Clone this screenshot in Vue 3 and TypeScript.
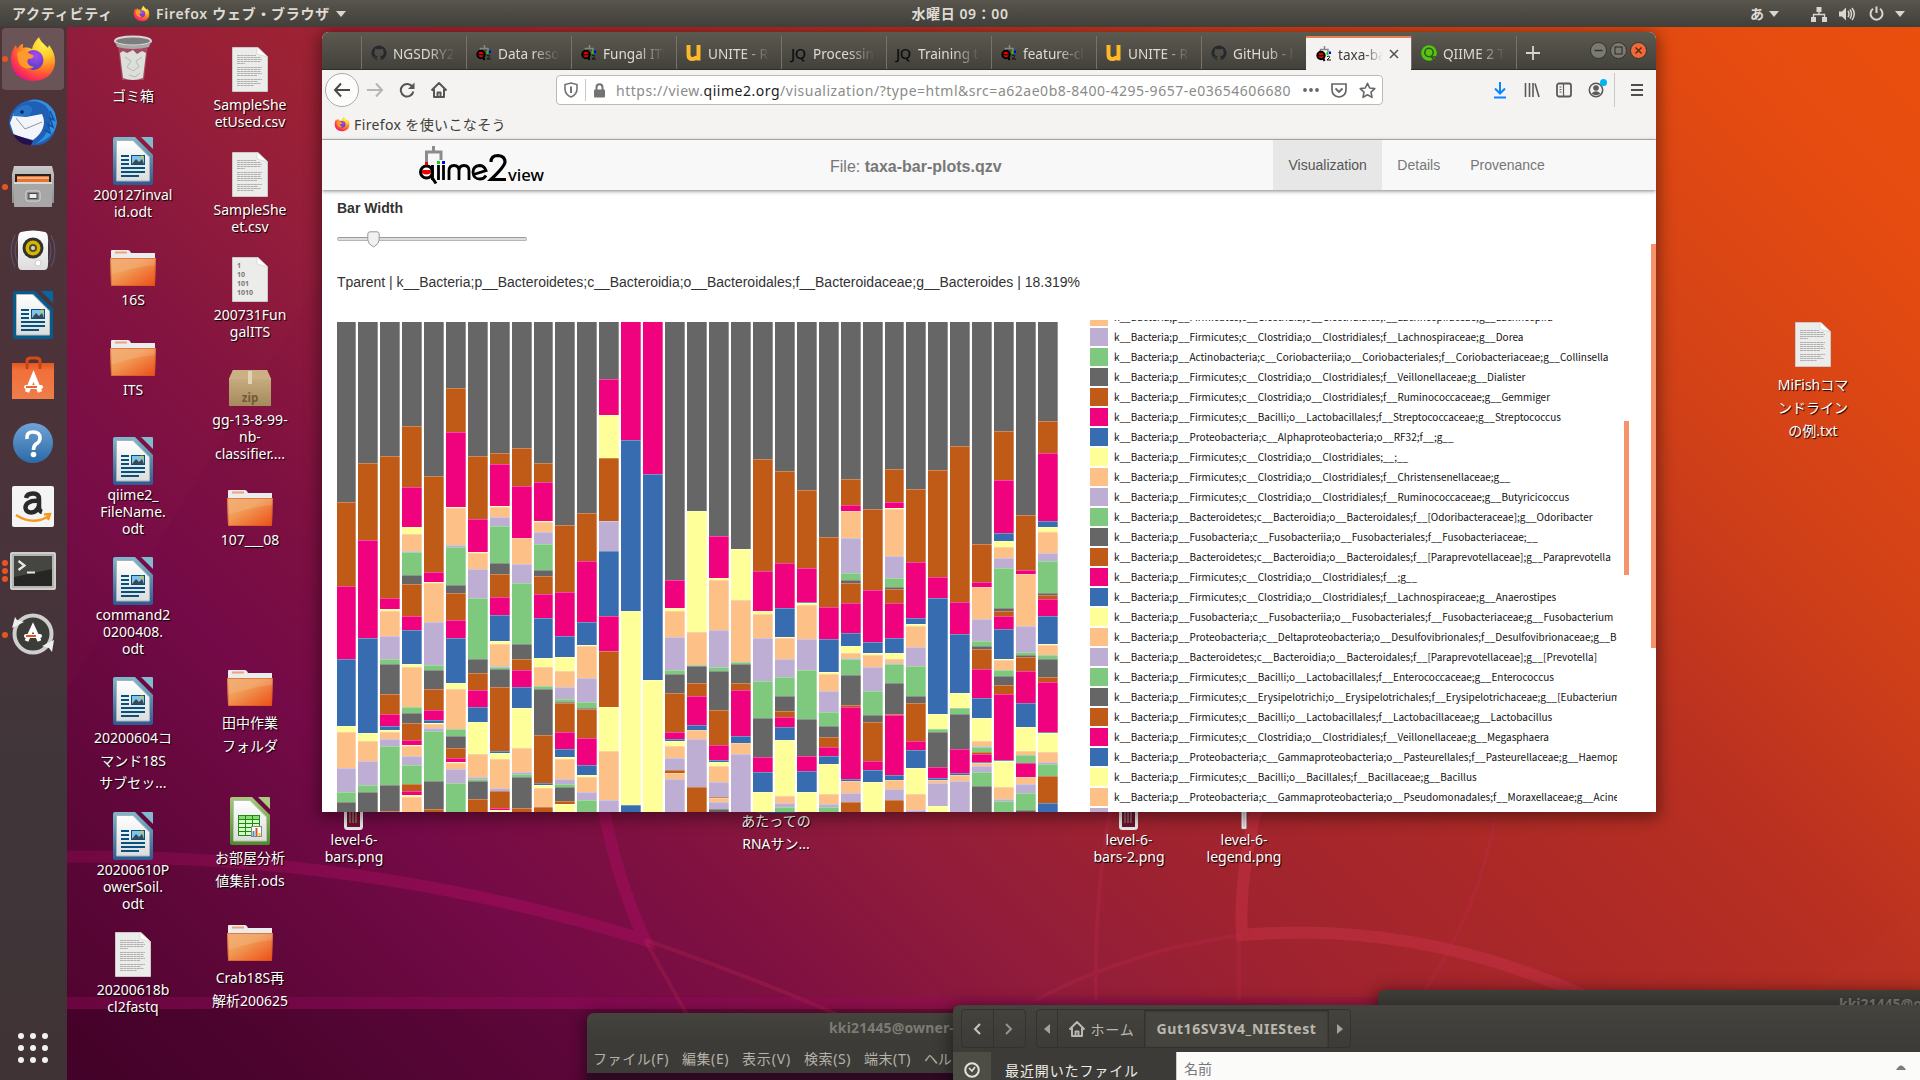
<script setup lang="ts">
interface DesktopItem {
  x: number
  y: number
  icon: string
  w: number
  h: number
  label: number
  lh: number
  lines: string[]
}

interface Segment {
  color: string
  height: number
}

interface Tab {
  icon: string
  title: string
  active?: boolean
}

// Spreads the letters of an element so that it takes the given width.
const vFit = {
  mounted(el: HTMLElement, binding: { value: number }) {
    const width = el.getBoundingClientRect().width
    const count = (el.textContent || '').trim().length
    el.style.letterSpacing = `${(binding.value - width) / count}px`
  },
}

const palette: Record<string, string> = {
  G: '#666666',
  O: '#bf5b17',
  P: '#f0027f',
  B: '#386cb0',
  Y: '#ffff99',
  A: '#fdc086',
  V: '#beaed4',
  E: '#7fc97f',
}

const chartTop = 322

// Each bar lists its taxa from the top down, as colour letter and bottom edge.
const barData: string[] = [
  'G502 O586 P659 B726 Y732 A768 V792 E802 G812',
  'G463 O540 P638 B733 Y741 A761 V785 E792 G812',
  'G456 O598 P609 Y611 A636 V659 E664 G694 O714 P726 B730 Y732 A739 V746 E785 G811 O812',
  'G426 O487 P527 Y534 A551 V552 E575 G584 O616 P630 B664 Y667 A707 E713 G723 O740 P745 Y746 A756 V765 E784 O791 P795 Y797 A812',
  'G476 O572 P582 Y583 A622 V665 E670 G689 O710 P720 B723 Y724 A728 V731 E781 G809 O812',
  'G388 O432 P507 Y508 A545 V547 E585 G593 O620 P638 B683 Y689 A729 E736 G748 O758 P762 Y763 A769 V783 E812',
  'G456 O519 P552 Y553 A569 V598 E659 G673 O690 P707 B722 Y754 A777 V779 E781 G799 O812',
  'G453 O464 P506 Y507 A517 V526 E563 G574 O597 P615 B641 Y644 A666 V667 E669 G687 O751 B753 Y759 A788 V791 O808 P810 Y812',
  'G448 O486 P538 A564 V583 E644 G659 O670 P687 B708 Y748 A772 V774 E777 G808 O812',
  'G463 O482 P521 Y522 A532 V544 E570 G576 O594 P618 B658 Y667 A686 E689 G735 O783 B785 Y788 A807 O812',
  'G525 O592 P636 B657 Y671 A687 V699 E702 G703 O732 P749 B757 Y759 A779 V784 E787 G801 O804 Y812',
  'G513 O561 P622 B645 Y646 A678 V702 E708 G709 O738 P765 B775 Y777 A792 V800 E812',
  'G379 P415 Y458 O521 V551 B616 P651 O707 Y751 A800 V812',
  'P440 B611 Y805 B812',
  'P474 B680 Y812',
  'G580 P608 Y611 A637 V670 E674 G693 O732 P739 B741 Y746 A758 V770 O773 A779 V812',
  'G511 Y632 A665 E666 G683 O696 P725 B730 A739 V787 O812',
  'G536 P578 Y580 A630 V667 E671 G710 O745 P760 B762 Y766 A782 V797 O798 A802 V809 G812',
  'G549 Y600 A662 E664 G683 O690 P736 B743 A754 V812',
  'G459 O571 P611 Y614 A638 V681 E718 G757 P772 B792 Y812',
  'G471 O563 P608 B637 Y638 A659 V677 E696 G711 O717 P727 B740 Y796 A803 V807 E812',
  'G490 O568 P602 B603 Y605 A639 V670 E719 G756 P771 B792 Y812',
  'G537 O607 P639 B672 Y674 A691 V712 E726 G737 O747 P756 B764 Y794 A804 V807 E812',
  'G479 O505 P511 A538 V573 E580 G583 O603 P633 B646 Y653 A658 V659 E675 G705 O707 P779 B781 A793 V802 O812',
  'G509 O590 P642 B653 Y655 A667 V691 E715 G722 O761 P770 B782 Y812',
  'G469 O502 P508 Y509 A556 V578 E587 G589 O603 P638 B653 Y659 A663 V664 E683 G714 O715 P775 B780 A789 V800 O812',
  'G489 O562 P618 B624 Y626 A647 V666 E696 G703 O741 P750 B768 Y794 A810 V812',
  'G470 O577 P598 B714 Y729 E732 G767 P778 B780 A783 V806 Y812',
  'G446 O602 P634 B693 Y708 E714 G749 P773 B775 A781 V812',
  'G544 O582 P587 A619 V641 E646 G649 O669 P698 B718 Y741 A746 V747 E752 O754 P762 B763 A766 V772 E786 G812',
  'G431 O480 P533 B541 Y547 A558 V568 E608 G611 O616 P629 B659 Y660 A670 E676 G685 O694 P760 B761 Y787 A799 V801 E812',
  'G515 O570 P574 A626 V652 E655 G657 O671 P703 B727 Y751 A755 E763 P777 A784 V793 E810 G812',
  'G421 O453 P521 B527 Y532 A553 V561 E593 G595 O599 P616 B644 Y645 A655 E659 G677 O682 P732 B733 Y752 A762 V764 E776 O803 B812',
]

const bars: Segment[][] = barData.map((row) => {
  let edge = chartTop
  return row.split(' ').map((part) => {
    const bottom = Number(part.slice(1))
    const segment = { color: palette[part[0]], height: bottom - edge }
    edge = bottom
    return segment
  })
})

const firm = 'p__Firmicutes;c__'
const legendRows: string[] = [
  firm + 'Clostridia;o__Clostridiales;f__Lachnospiraceae;g__Lachnospira',
  firm + 'Clostridia;o__Clostridiales;f__Lachnospiraceae;g__Dorea',
  'p__Actinobacteria;c__Coriobacteriia;o__Coriobacteriales;f__Coriobacteriaceae;g__Collinsella',
  firm + 'Clostridia;o__Clostridiales;f__Veillonellaceae;g__Dialister',
  firm + 'Clostridia;o__Clostridiales;f__Ruminococcaceae;g__Gemmiger',
  firm + 'Bacilli;o__Lactobacillales;f__Streptococcaceae;g__Streptococcus',
  'p__Proteobacteria;c__Alphaproteobacteria;o__RF32;f__;g__',
  firm + 'Clostridia;o__Clostridiales;__;__',
  firm + 'Clostridia;o__Clostridiales;f__Christensenellaceae;g__',
  firm + 'Clostridia;o__Clostridiales;f__Ruminococcaceae;g__Butyricicoccus',
  'p__Bacteroidetes;c__Bacteroidia;o__Bacteroidales;f__[Odoribacteraceae];g__Odoribacter',
  'p__Fusobacteria;c__Fusobacteriia;o__Fusobacteriales;f__Fusobacteriaceae;__',
  'p__Bacteroidetes;c__Bacteroidia;o__Bacteroidales;f__[Paraprevotellaceae];g__Paraprevotella',
  firm + 'Clostridia;o__Clostridiales;f__;g__',
  firm + 'Clostridia;o__Clostridiales;f__Lachnospiraceae;g__Anaerostipes',
  'p__Fusobacteria;c__Fusobacteriia;o__Fusobacteriales;f__Fusobacteriaceae;g__Fusobacterium',
  'p__Proteobacteria;c__Deltaproteobacteria;o__Desulfovibrionales;f__Desulfovibrionaceae;g__Bilophila',
  'p__Bacteroidetes;c__Bacteroidia;o__Bacteroidales;f__[Paraprevotellaceae];g__[Prevotella]',
  firm + 'Bacilli;o__Lactobacillales;f__Enterococcaceae;g__Enterococcus',
  firm + 'Erysipelotrichi;o__Erysipelotrichales;f__Erysipelotrichaceae;g__[Eubacterium]',
  firm + 'Bacilli;o__Lactobacillales;f__Lactobacillaceae;g__Lactobacillus',
  firm + 'Clostridia;o__Clostridiales;f__Veillonellaceae;g__Megasphaera',
  'p__Proteobacteria;c__Gammaproteobacteria;o__Pasteurellales;f__Pasteurellaceae;g__Haemophilus',
  firm + 'Bacilli;o__Bacillales;f__Bacillaceae;g__Bacillus',
  'p__Proteobacteria;c__Gammaproteobacteria;o__Pseudomonadales;f__Moraxellaceae;g__Acinetobacter',
]
const cycle = 'AVEGOPBY'
const legend = legendRows.map((name, i) => ({ name: 'k__Bacteria;' + name, color: palette[cycle[i % 8]] }))

const tabs: Tab[] = [
  { icon: 'github', title: 'NGSDRY2' },
  { icon: 'qiime', title: 'Data resources' },
  { icon: 'qiime', title: 'Fungal ITS' },
  { icon: 'unite', title: 'UNITE - Res' },
  { icon: 'jq', title: 'Processing' },
  { icon: 'jq', title: 'Training tax' },
  { icon: 'qiime', title: 'feature-cla' },
  { icon: 'unite', title: 'UNITE - Res' },
  { icon: 'github', title: 'GitHub - ho' },
  { icon: 'qiime', title: 'taxa-bar', active: true },
  { icon: 'q2g', title: 'QIIME 2 Tax' },
]

const writer = { icon: 'writer-doc', w: 40, h: 48 }
const folder = { icon: 'folder', w: 46, h: 38 }
const textDoc = { icon: 'text-doc', w: 36, h: 45 }

const desktop: DesktopItem[] = [
  { x: 133, y: 35, icon: 'trash', w: 40, h: 46, label: 85, lh: 22, lines: ['ゴミ箱'] },
  { x: 133, y: 137, ...writer, label: 186, lh: 17, lines: ['200127inval', 'id.odt'] },
  { x: 133, y: 249, ...folder, label: 291, lh: 17, lines: ['16S'] },
  { x: 133, y: 339, ...folder, label: 381, lh: 17, lines: ['ITS'] },
  { x: 133, y: 437, ...writer, label: 486, lh: 17, lines: ['qiime2_', 'FileName.', 'odt'] },
  { x: 133, y: 557, ...writer, label: 606, lh: 17, lines: ['command2', '0200408.', 'odt'] },
  { x: 133, y: 677, ...writer, label: 727, lh: 22.7, lines: ['20200604コ', 'マンド18S', 'サブセッ...'] },
  { x: 133, y: 812, ...writer, label: 861, lh: 17, lines: ['20200610P', 'owerSoil.', 'odt'] },
  { x: 133, y: 932, ...textDoc, label: 981, lh: 17, lines: ['20200618b', 'cl2fastq'] },
  { x: 250, y: 47, ...textDoc, label: 96, lh: 17, lines: ['SampleShe', 'etUsed.csv'] },
  { x: 250, y: 152, ...textDoc, label: 201, lh: 17, lines: ['SampleShe', 'et.csv'] },
  { x: 250, y: 257, icon: 'bin-doc', w: 36, h: 45, label: 306, lh: 17, lines: ['200731Fun', 'galITS'] },
  { x: 250, y: 369, icon: 'zip', w: 42, h: 38, label: 411, lh: 17, lines: ['gg-13-8-99-', 'nb-', 'classifier....'] },
  { x: 250, y: 489, ...folder, label: 531, lh: 17, lines: ['107___08'] },
  { x: 250, y: 669, ...folder, label: 712, lh: 22.7, lines: ['田中作業', 'フォルダ'] },
  { x: 250, y: 797, icon: 'calc-doc', w: 40, h: 48, label: 847, lh: 22.7, lines: ['お部屋分析', '値集計.ods'] },
  { x: 250, y: 924, ...folder, label: 967, lh: 22.7, lines: ['Crab18S再', '解析200625'] },
  { x: 354, y: 785, icon: 'png', w: 20, h: 45, label: 831, lh: 17, lines: ['level-6-', 'bars.png'] },
  { x: 776, y: 765, ...writer, label: 810, lh: 22.7, lines: ['あたっての', 'RNAサン...'] },
  { x: 1129, y: 785, icon: 'png', w: 20, h: 45, label: 831, lh: 17, lines: ['level-6-', 'bars-2.png'] },
  { x: 1244, y: 785, icon: 'png-thin', w: 6, h: 45, label: 831, lh: 17, lines: ['level-6-', 'legend.png'] },
  { x: 1813, y: 322, ...textDoc, label: 373, lh: 23, lines: ['MiFishコマ', 'ンドライン', 'の例.txt'] },
]

const dock = [
  { icon: 'firefox', dots: 1 },
  { icon: 'thunderbird', dots: 0 },
  { icon: 'cabinet', dots: 1 },
  { icon: 'speaker', dots: 0 },
  { icon: 'writer-app', dots: 0 },
  { icon: 'software', dots: 0 },
  { icon: 'help', dots: 0 },
  { icon: 'amazon', dots: 0 },
  { icon: 'terminal', dots: 3 },
  { icon: 'updater', dots: 1 },
]

const menus = ['ファイル(F)', '編集(E)', '表示(V)', '検索(S)', '端末(T)', 'ヘルプ(H)']
const menuWidths = [76, 47, 49, 47, 47, 60]
</script>

<template>
  <div class="screen">
    <svg class="defs" width="0" height="0">
      <defs>
        <linearGradient id="gFolder" x1="0" y1="0" x2="1" y2="1">
          <stop offset="0" stop-color="#f0a45e" /><stop offset=".4" stop-color="#f09a55" /><stop offset="1" stop-color="#ee4c14" />
        </linearGradient>
        <radialGradient id="gFire" cx=".75" cy=".15" r=".95">
          <stop offset="0" stop-color="#fff44f" /><stop offset=".3" stop-color="#ffcb2e" /><stop offset=".6" stop-color="#ff7a22" /><stop offset=".85" stop-color="#ff3350" /><stop offset="1" stop-color="#e31587" />
        </radialGradient>
        <radialGradient id="gCore" cx=".6" cy=".3" r=".8">
          <stop offset="0" stop-color="#a74cf2" /><stop offset="1" stop-color="#4b3ab8" />
        </radialGradient>
        <linearGradient id="gGrey" x1="0" y1="0" x2="0" y2="1">
          <stop offset="0" stop-color="#c9c9c9" /><stop offset="1" stop-color="#8c8c8c" />
        </linearGradient>
        <linearGradient id="gPaper" x1="0" y1="0" x2="0" y2="1">
          <stop offset="0" stop-color="#ffffff" /><stop offset="1" stop-color="#dcdcdc" />
        </linearGradient>
        <linearGradient id="gBlue" x1="0" y1="0" x2="0" y2="1">
          <stop offset="0" stop-color="#7fb9cb" /><stop offset="1" stop-color="#2e5a91" />
        </linearGradient>
        <linearGradient id="gCalc" x1="0" y1="0" x2="0" y2="1">
          <stop offset="0" stop-color="#a9c97c" /><stop offset="1" stop-color="#4a8c2c" />
        </linearGradient>
        <linearGradient id="gHelp" x1="0" y1="0" x2="0" y2="1">
          <stop offset="0" stop-color="#6fa3d8" /><stop offset="1" stop-color="#2b6aa6" />
        </linearGradient>
        <linearGradient id="gBag" x1="0" y1="0" x2="0" y2="1">
          <stop offset="0" stop-color="#e2571e" /><stop offset=".2" stop-color="#f0703a" /><stop offset="1" stop-color="#ef7d4a" />
        </linearGradient>
        <linearGradient id="gZip" x1="0" y1="0" x2="0" y2="1">
          <stop offset="0" stop-color="#d0b588" /><stop offset="1" stop-color="#a58a5e" />
        </linearGradient>
      </defs>
      <symbol id="firefox" viewBox="0 0 48 48">
        <path d="M24 46C11 46 2 37 2 25C2 17 5 12 7 10L8 14C10 11 12 9 14 9L14 13C18 12 21 13 23 14C24 9 27 5 30 2C31 6 35 9 39 13L40 10C44 15 46.500 21 46 28C45 39 36 46 24 46Z" fill="url(#gFire)" />
        <circle cx="24.500" cy="25" r="10" fill="url(#gCore)" />
        <path d="M8 18C13 14 18 16 21 19L24 20C26 23 21 24 19 24C17 28 20 31 25 32C19 36 10 32 9 25Z" fill="#ff9a2a" />
      </symbol>
      <symbol id="thunderbird" viewBox="0 0 48 48">
        <path d="M24 1C38 1 48 12 47 26C46 40 35 48 22 46C10 44 0 35 0 22C2 9 12 1 24 1Z" fill="#1f5fb5" />
        <path d="M12 6C22-1 37 2 41 14C44 25 37 39 26 45C38 42 47 34 48 23L46 14C42 5 32-1 22 1Z" fill="#2f8fe0" />
        <path d="M41 12L45 21L41 19L44 28L39 25L41 34L36 31" fill="none" stroke="#174f9f" stroke-width="1.500" />
        <path d="M1 24L5 14L17 18L33 15C38 25 33 35 24 41L5 36Z" fill="#f3f5fb" />
        <path d="M7 19L16 30L33 23" fill="none" stroke="#8a93a5" stroke-width="1" />
        <path d="M4 17C6 9 15 4 21 7C25 9 23 16 17 18Z" fill="#2a74c8" />
        <path d="M4 35L24 42L22 46C14 46 8 43 4 35Z" fill="#24104d" />
        <circle cx="13" cy="13" r="1.800" fill="#0c2347" />
      </symbol>
      <symbol id="cabinet" viewBox="0 0 48 48">
        <path d="M5 3H43L45 11V40H3V11Z" fill="url(#gGrey)" /><rect x="6" y="11" width="36" height="9" fill="#2b2220" />
        <rect x="8" y="13" width="32" height="6" fill="#e7732d" /><path d="M8 15H40" stroke="#fff0db" />
        <rect x="5" y="19" width="38" height="25" rx="1" fill="#a7a7a7" /><rect x="5" y="19" width="38" height="2" fill="#d9d9d9" />
        <rect x="17" y="28" width="14" height="10" rx="2" fill="#8b8b8b" stroke="#ddd" /><rect x="20" y="30.500" width="8" height="5" fill="#eee" stroke="#444" />
      </symbol>
      <symbol id="speaker" viewBox="0 0 48 48">
        <path d="M6 8Q-2 24 6 40M10 10Q2 24 10 38M42 8Q50 24 42 40M38 10Q46 24 38 38" fill="none" stroke="#5c6792" opacity=".7" />
        <path d="M12 5Q24 2 36 5Q39 6 39 12V38Q39 43 35 43H13Q9 43 9 38V12Q9 6 12 5Z" fill="url(#gPaper)" />
        <circle cx="24" cy="21" r="10.500" fill="#33332d" /><circle cx="24" cy="21" r="7.500" fill="#d6b500" /><circle cx="24" cy="21" r="4" fill="#55502a" /><circle cx="24" cy="21" r="2" fill="#d6d6d6" />
        <circle cx="29" cy="36" r="3" fill="#fff" stroke="#ccc" />
      </symbol>
      <symbol id="writer-app" viewBox="0 0 40 48">
        <path d="M2 0H22L40 18V46Q40 48 38 48H2Q0 48 0 46V2Q0 0 2 0Z" fill="#085b8d" /><path d="M28 0H40V12Z" fill="#0467a1" />
        <path d="M3.500 3.500H20L36.500 20V44H3.500Z" fill="url(#gPaper)" stroke="#bbb" />
        <path d="M8 19H16M8 23H16M8 27H16M8 31H32M8 35H32M8 39H26" stroke="#06527f" stroke-width="2" />
        <rect x="18.500" y="18.500" width="13" height="9" fill="#7fc4ee" stroke="#06527f" /><path d="M19 27L23 22L26 25L29 22L31 27Z" fill="#3c4a50" /><circle cx="29" cy="20" r="1.500" fill="#e6c229" />
      </symbol>
      <symbol id="writer-doc" viewBox="0 0 40 48">
        <path d="M2 0H22L40 18V46Q40 48 38 48H2Q0 48 0 46V2Q0 0 2 0Z" fill="url(#gBlue)" /><path d="M28 0H39Q40 0 40 1V12Z" fill="#82bbcd" />
        <path d="M3.500 3.500H20L36.500 20V44H3.500Z" fill="url(#gPaper)" stroke="#a9b4ba" />
        <path d="M8 19H16M8 23H16M8 27H16M8 31H32M8 35H32M8 39H26" stroke="#06527f" stroke-width="2" />
        <rect x="18.500" y="18.500" width="13" height="9" fill="#7fc4ee" stroke="#06527f" /><path d="M19 27L23 22L26 25L29 22L31 27Z" fill="#3c4a50" /><circle cx="29" cy="20" r="1.500" fill="#e6c229" />
      </symbol>
      <symbol id="calc-doc" viewBox="0 0 40 48">
        <path d="M2 0H22L40 18V46Q40 48 38 48H2Q0 48 0 46V2Q0 0 2 0Z" fill="url(#gCalc)" /><path d="M28 0H39Q40 0 40 1V12Z" fill="#acca80" />
        <path d="M3.500 3.500H20L36.500 20V44H3.500Z" fill="url(#gPaper)" stroke="#b7c4ac" />
        <rect x="8.500" y="18.500" width="21" height="20" fill="#d4fbc8" stroke="#1f8a10" /><rect x="9" y="19" width="20" height="3" fill="#86dc74" />
        <path d="M8 22.500H30M8 26.500H30M8 30.500H30M8 34.500H30M15.500 18V39M22.500 18V39" stroke="#1f8a10" />
        <rect x="21.500" y="29.500" width="10" height="10" fill="#fff" stroke="#888" /><path d="M23.500 39V34" stroke="#2c98e0" stroke-width="2" /><path d="M26.500 39V31" stroke="#d9541e" stroke-width="2" /><path d="M29.500 39V36" stroke="#f0c419" stroke-width="2" />
      </symbol>
      <symbol id="software" viewBox="0 0 48 48">
        <path d="M18 14V6Q18 3 22 3H27Q31 3 31 6V14" fill="none" stroke="#d64a15" stroke-width="3" />
        <path d="M3 8H45V44H3Z" fill="url(#gBag)" /><path d="M18 8V14M31 8V14" stroke="#c74412" stroke-width="3" />
        <path d="M18 37L24.500 21L31 37" fill="none" stroke="#fff" stroke-width="4.500" /><rect x="15" y="30" width="19" height="4" rx="2" fill="#fff" /><path d="M17 32H28" stroke="#e95420" stroke-width="1.800" />
      </symbol>
      <symbol id="help" viewBox="0 0 48 48">
        <circle cx="24" cy="24" r="20" fill="url(#gHelp)" /><path d="M18 20Q17 13 24 13Q31 13 31 19Q31 23 27 25Q24.500 27 24.500 31" fill="none" stroke="#fff" stroke-width="3.600" /><circle cx="24.500" cy="35.500" r="2.800" fill="#fff" />
      </symbol>
      <symbol id="amazon" viewBox="0 0 48 48">
        <rect x="3" y="3" width="42" height="41" rx="2" fill="#f4f4f4" />
        <path d="M17 15Q18 10.500 24 10.500Q30 10.500 30 16V24Q30 28 33 29M30 18C20 17 16.500 21 16.500 24.500C16.500 31 27 32 30 23" fill="none" stroke="#2a2a2a" stroke-width="4.500" />
        <path d="M7 32Q24 43 40 33M35 31.500L41 31L39 37" fill="none" stroke="#f7981d" stroke-width="2.400" />
      </symbol>
      <symbol id="terminal" viewBox="0 0 48 48">
        <rect x="1" y="5" width="46" height="38" rx="2" fill="#b4b4b0" /><rect x="2" y="6" width="44" height="36" rx="1" fill="none" stroke="#e8e8e4" />
        <rect x="5" y="9" width="38" height="30" fill="#262624" /><path d="M5 9H43V22L5 30Z" fill="#454542" />
        <path d="M9.500 14L15.500 18.500L9.500 23M18 25.500H26" fill="none" stroke="#e8e8e8" stroke-width="2.200" />
      </symbol>
      <symbol id="updater" viewBox="0 0 48 48">
        <circle cx="24" cy="23" r="18.500" fill="#3c3c38" stroke="#cfcfcd" stroke-width="4" />
        <path d="M17.500 30L24 16L30.500 30" fill="none" stroke="#fff" stroke-width="4" /><rect x="15" y="23" width="18" height="4" rx="2" fill="#fff" /><path d="M17 25H27" stroke="#e95420" stroke-width="2" />
        <path d="M3 17L6 6L8 9L15 11Z" fill="#eee" /><path d="M45 29L43 41L40 37L33 35Z" fill="#eee" />
      </symbol>
      <symbol id="trash" viewBox="0 0 40 46">
        <path d="M5 10L9 45H31L35 10Z" fill="#b9808d" opacity=".45" />
        <path d="M7 18L10 43Q20 47 30 43L33 18L29 16L24 19L20 15L14 18L10 16Z" fill="#dcdfda" /><path d="M12 22L18 26L14 32L20 36L26 32L23 26L29 22M16 40L22 42L27 38" fill="none" stroke="#b5b8b3" />
        <ellipse cx="20" cy="6" rx="18" ry="4.500" fill="#7d7d7d" stroke="#d9d9d9" stroke-width="2" /><path d="M2 6L4 12Q20 16 36 12L38 6Q36 10 20 10.500Q4 10 2 6Z" fill="#a8a8a8" />
      </symbol>
      <symbol id="folder" viewBox="0 0 46 38">
        <path d="M1 9V2Q1 1 2 1H18Q20 1 21 4H45V12H1Z" fill="#ececec" /><path d="M5 3.500H17" stroke="#f0a27c" stroke-width="2" />
        <path d="M0 9H46L45 36Q45 37 44 37H2Q1 37 1 36Z" fill="url(#gFolder)" /><path d="M0 9H46L45.700 16Q24 18 1 26Z" fill="#fff" opacity=".13" /><path d="M.5 9.500H45.500L44.500 36.500H1.500Z" fill="none" stroke="#cf5620" opacity=".55" />
      </symbol>
      <symbol id="text-doc" viewBox="0 0 36 45">
        <path d="M.5.5H26L35.500 10V44.500H.5Z" fill="#ececea" stroke="#c9c9c7" /><path d="M25 0L36 10L25 7Z" fill="#fff" stroke="#c4c4c2" stroke-width=".5" />
        <path d="M5 8.500H24M5 10.500H29M5 12.500H30M5 14.500H29M5 16.500H13M5 20.500H30M5 22.500H29M5 24.500H29M5 26.500H30M5 28.500H25M5 32.500H30M5 34.500H26M5 36.500H29M5 38.500H22" stroke="#b0b0ae" stroke-dasharray="3 .4" />
      </symbol>
      <symbol id="bin-doc" viewBox="0 0 36 45">
        <path d="M.5.5H26L35.500 10V44.500H.5Z" fill="#ececea" stroke="#c9c9c7" /><path d="M25 0L36 10L25 7Z" fill="#fff" stroke="#c4c4c2" stroke-width=".5" />
        <g fill="#777" font-family="Open Sans, sans-serif" font-weight="700" font-size="7"><text x="5" y="11">1</text><text x="5" y="20">10</text><text x="5" y="29">101</text><text x="5" y="38">1010</text></g>
      </symbol>
      <symbol id="zip" viewBox="0 0 42 38">
        <path d="M4 1H38L42 10V37H0V10Z" fill="url(#gZip)" /><path d="M4 1H38L42 10H0Z" fill="#cbb086" /><rect x="19" y="2" width="4" height="13" fill="#e3d3b6" />
        <text x="21" y="33" text-anchor="middle" font-family="Open Sans, sans-serif" font-weight="700" font-size="11.500" fill="#6f5a36">zip</text>
      </symbol>
      <symbol id="png" viewBox="0 0 20 45"><rect x="1.500" y="1" width="16" height="42.500" rx="2" fill="#6a1230" stroke="#eceaea" stroke-width="3" /><path d="M6 4V38M9 4V38M12 4V38" stroke="#9b6a6a" stroke-width="1.500" /></symbol>
      <symbol id="png-thin" viewBox="0 0 6 45"><rect x=".5" y="0" width="5" height="44" rx="1" fill="#ececec" stroke="#999" stroke-width=".5" /><path d="M3 0V42" stroke="#bbb" /></symbol>
      <symbol id="github" viewBox="0 0 16 16"><path d="M8 .5A7.500 7.500 0 0 0 5.600 15.100C6 15.200 6.100 15 6.100 14.700V13.400C4 13.800 3.500 12.500 3.500 12.500C3.200 11.600 2.700 11.400 2.700 11.400C2 10.900 2.800 10.900 2.800 10.900C3.500 11 3.900 11.700 3.900 11.700C4.600 12.800 5.700 12.500 6.200 12.300C6.200 11.800 6.500 11.500 6.700 11.300C5 11.100 3.300 10.500 3.300 7.600C3.300 6.800 3.600 6.100 4.100 5.500C4 5.300 3.800 4.600 4.200 3.500C4.200 3.500 4.800 3.300 6.200 4.300Q8 3.800 9.900 4.300C11.300 3.300 11.900 3.500 11.900 3.500C12.300 4.600 12 5.300 12 5.500C12.500 6.100 12.800 6.800 12.800 7.600C12.800 10.500 11 11.100 9.300 11.300C9.600 11.500 9.900 12 9.900 12.700V14.700C9.900 15 10 15.200 10.400 15.100A7.500 7.500 0 0 0 8 .5Z" fill="#24292e" /></symbol>
      <symbol id="qiime" viewBox="0 0 16 16"><path d="M4.500 6V3.500H12V6M8.500 0V3.500" fill="none" stroke="#888" stroke-width="1.500" /><circle cx="5" cy="9.500" r="3.700" fill="#e00000" stroke="#000" stroke-width="2" /><path d="M1.500 9.700H8.500" stroke="#000" stroke-width="1" /><path d="M7 12L8.500 15" stroke="#000" stroke-width="2" /><path d="M11.500 6V9" stroke="#00e000" stroke-width="2" /><path d="M14 5.500V8" stroke="#0000f0" stroke-width="2" /><path d="M11 10.500Q14.500 9.500 13.500 11.500L11 14H15" fill="none" stroke="#111" /></symbol>
      <symbol id="unite" viewBox="0 0 16 16"><path d="M2.500 0V10Q2.500 14 6.500 14Q10 14 10.500 11M12.500 0V15.500" fill="none" stroke="#fdb928" stroke-width="4" /></symbol>
      <symbol id="q2g" viewBox="0 0 16 16"><circle cx="8" cy="8" r="7.800" fill="#54c80c" /><circle cx="8" cy="7.500" r="4.200" fill="none" stroke="#31592a" stroke-width="1.600" /><path d="M10 11.500L13 15M10 12H15" stroke="#314c2a" stroke-width="1.500" /></symbol>
      <symbol id="house" viewBox="0 0 18 18"><path d="M1.500 9.500L9 2L16.500 9.500M4 8V16H14V8M7.500 16V11.500H10.500V16" fill="none" stroke="currentColor" stroke-width="2" stroke-linejoin="round" /></symbol>
    </svg>

    <svg class="wallpaper" width="1920" height="1080" viewBox="0 0 1920 1080">
      <defs>
        <linearGradient id="gArc" x1="67" x2="500" y1="0" y2="0" gradientUnits="userSpaceOnUse">
          <stop offset="0" stop-color="#a40c5c" stop-opacity=".3" /><stop offset="1" stop-color="#a40c5c" stop-opacity=".55" />
        </linearGradient>
      </defs>
      <rect y="1009" width="1920" height="71" fill="#26001c" opacity=".26" />
      <rect y="997" width="1920" height="12" fill="#a00a62" opacity=".32" />
      <path d="M0 858Q340 845 645 940Q612 870 599 780" fill="none" stroke="url(#gArc)" stroke-width="12" />
      <path d="M1264 780Q1238 870 1242 935Q1420 920 1590 998" fill="none" stroke="#c23244" stroke-width="12" opacity=".55" />
      <path d="M645 940Q760 980 850 1020M645 940L690 1020M1110 812Q1094 900 1096 1000M1242 935Q1130 950 1036 1000M1239 940V1000M1496 812Q1480 910 1420 998" fill="none" stroke="#c02a50" stroke-width="4" opacity=".25" />
      <path d="M67 690L330 265V0H67ZM1800 1000L1920 905V1080H1800Z" fill="#d04050" opacity=".04" />
    </svg>

    <div
      v-for="(item, i) in desktop"
      :key="i"
      class="item"
      :style="{ left: item.x - 75 + 'px', top: item.y + 'px' }"
    >
      <svg class="item-icon" :width="item.w" :height="item.h"><use :href="'#' + item.icon" /></svg>
      <div class="item-label" :style="{ marginTop: item.label - item.y - item.h + 'px', lineHeight: item.lh + 'px' }">
        <span v-for="line in item.lines" :key="line">{{ line }}</span>
      </div>
    </div>

    <section class="win term-back"><b>kki21445@owner-</b></section>

    <section class="win term">
      <header><b v-fit="125">kki21445@owner-</b></header>
      <nav><span v-for="(m, i) in menus" :key="m"><i v-fit="menuWidths[i]">{{ m }}</i></span></nav>
      <div class="term-body"></div>
    </section>

    <section class="win files">
      <header>
        <div class="group nav-group">
          <span><svg width="12" height="14"><path d="M9 2L4 7L9 12" fill="none" stroke="#c9c6bd" stroke-width="2" /></svg></span>
          <span><svg width="12" height="14"><path d="M3 2L8 7L3 12" fill="none" stroke="#96948c" stroke-width="2" /></svg></span>
        </div>
        <div class="group path-group">
          <span class="arrow-cell"><svg width="6" height="10"><path d="M6 0V10L0 5Z" fill="#a5a299" /></svg></span>
          <span class="home-cell"><svg width="18" height="18"><use href="#house" /></svg><i v-fit="44">ホーム</i></span>
          <span class="here-cell"><b v-fit="160">Gut16SV3V4_NIEStest</b></span>
          <span class="arrow-cell"><svg width="6" height="10"><path d="M0 0V10L6 5Z" fill="#a5a299" /></svg></span>
        </div>
      </header>
      <div class="files-body">
        <div class="rail"><svg width="18" height="18"><circle cx="9" cy="9" r="6.800" fill="none" stroke="#e4e2dc" stroke-width="2" /><path d="M6 7L9 10L12 6" fill="none" stroke="#e4e2dc" stroke-width="1.500" /></svg></div>
        <div class="place"><i v-fit="134">最近開いたファイル</i></div>
        <div class="column"><span>名前</span><svg width="10" height="5"><path d="M0 5Q5-4 10 5Z" fill="#7d7d7b" /></svg></div>
      </div>
    </section>

    <section class="win firefox-win">
      <header class="tabbar">
        <div v-for="(tab, i) in tabs" :key="i" class="tab" :class="{ active: tab.active }">
          <span v-if="tab.icon === 'jq'" class="jq">JQ</span>
          <svg v-else width="16" height="16"><use :href="'#' + tab.icon" /></svg>
          <span class="tab-title">{{ tab.title }}</span>
          <svg v-if="tab.active" class="tab-close" width="10" height="10"><path d="M1 1L9 9M9 1L1 9" stroke="#555" stroke-width="1.600" /></svg>
        </div>
        <div class="tab-end"></div>
        <svg class="plus" width="14" height="14"><path d="M7 0V14M0 7H14" stroke="#d8d5ce" stroke-width="1.800" /></svg>
        <div class="controls">
          <svg width="17" height="17"><circle cx="8.500" cy="8.500" r="8" fill="#7b7972" stroke="#34332e" /><path d="M4.500 8.500H12.500" stroke="#35342f" stroke-width="1.300" /></svg>
          <svg width="17" height="17"><circle cx="8.500" cy="8.500" r="8" fill="#7b7972" stroke="#34332e" /><rect x="5" y="5" width="7" height="7" fill="none" stroke="#35342f" stroke-width="1.200" /></svg>
          <svg width="17" height="17"><circle cx="8.500" cy="8.500" r="8" fill="#ef6a3b" stroke="#34332e" /><path d="M5.500 5.500L11.500 11.500M11.500 5.500L5.500 11.500" stroke="#5a2410" stroke-width="1.400" /></svg>
        </div>
      </header>

      <div class="toolbar">
        <span class="back"><svg width="18" height="16"><path d="M17 8H2M8 1.500L2 8L8 14.500" fill="none" stroke="#4a4a48" stroke-width="2" /></svg></span>
        <svg class="forward" width="18" height="16"><path d="M1 8H16M10 1.500L16 8L10 14.500" fill="none" stroke="#b6b5b3" stroke-width="2" /></svg>
        <svg class="reload" width="16" height="16"><path d="M13.500 5A6.300 6.300 0 1 0 14.300 9.500" fill="none" stroke="#565654" stroke-width="2" /><path d="M15.500 .5V7H9Z" fill="#565654" /></svg>
        <svg class="home" width="18" height="18"><use href="#house" /></svg>
        <div class="urlbar">
          <svg width="14" height="16"><path d="M7 1L13 2.500V7Q13 12.500 7 15Q1 12.500 1 7V2.500Z" fill="none" stroke="#737371" stroke-width="1.600" /><path d="M7 4.500V11" stroke="#737371" stroke-width="2" /></svg>
          <i class="vr"></i>
          <svg class="lock" width="13" height="15"><path d="M3.500 7V4.500Q3.500 1.200 6.500 1.200Q9.500 1.200 9.500 4.500V7" fill="none" stroke="#737371" stroke-width="2" /><rect x="1" y="6.500" width="11" height="8" rx="1" fill="#737371" /></svg>
          <span v-fit="675" class="url">https://view.<b>qiime2.org</b>/visualization/?type=html&amp;src=a62ae0b8-8400-4295-9657-e03654606680</span>
          <svg class="dots" width="16" height="6"><circle cx="2" cy="3" r="1.900" /><circle cx="8" cy="3" r="1.900" /><circle cx="14" cy="3" r="1.900" /></svg>
          <svg class="pocket" width="16" height="15"><path d="M1 1H15V6.500Q15 13.500 8 14Q1 13.500 1 6.500Z" fill="none" stroke="#676765" stroke-width="1.700" /><path d="M4.500 5.500L8 9L11.500 5.500" fill="none" stroke="#676765" stroke-width="1.800" /></svg>
          <svg class="star" width="17" height="17"><path d="M8.500 1.300L10.700 6L15.800 6.600L12 10.200L13 15.400L8.500 12.800L4 15.400L5 10.200L1.200 6.600L6.300 6Z" fill="none" stroke="#676765" stroke-width="1.600" stroke-linejoin="round" /></svg>
        </div>
        <div class="tools">
          <svg width="16" height="18"><path d="M8 1V12M3 7.500L8 12.500L13 7.500M2 16.500H14" fill="none" stroke="#0a84ff" stroke-width="2" /></svg>
          <svg width="16" height="16"><path d="M1.500 1V15M5.500 1V15M9 1V15M11 1.500L15 15" fill="none" stroke="#5a5a58" stroke-width="1.600" /></svg>
          <svg width="16" height="16"><rect x="1" y="1.500" width="14" height="13" rx="2" fill="none" stroke="#5a5a58" stroke-width="1.800" /><path d="M7.500 2V14M3.500 5H5.500M3.500 7.500H5.500M3.500 10H5.500" stroke="#5a5a58" stroke-width="1.200" /></svg>
          <svg width="20" height="20" class="account"><circle cx="8" cy="12" r="6.700" fill="none" stroke="#5a5a58" stroke-width="1.600" /><circle cx="8" cy="10" r="2.800" fill="#5a5a58" /><path d="M3.500 15.500Q8 11 12.500 15.500Q8 19 3.500 15.500Z" fill="#5a5a58" /><circle cx="15.500" cy="4.500" r="3.500" fill="#00b3f4" /></svg>
          <i class="vr tall"></i>
          <svg width="14" height="14"><path d="M1 2H13M1 7H13M1 12H13" stroke="#4e4e4c" stroke-width="2" /></svg>
        </div>
      </div>

      <div class="bookmarks"><svg width="16" height="16"><use href="#firefox" /></svg><span v-fit="152">Firefox を使いこなそう</span></div>

      <div class="page-head">
        <div class="logo">
          <svg width="126" height="40" viewBox="0 0 126 40">
            <path d="M7.500 18V7H22V15M14.500 1V7" fill="none" stroke="#8c8c8c" stroke-width="3" />
            <circle cx="7.500" cy="27" r="6" fill="#fff" stroke="#000" stroke-width="3" /><path d="M3 25H12V28Q7 31 3 28Z" fill="#e00" /><path d="M7.500 17V20" stroke="#e00" stroke-width="3" />
            <path d="M12 31L17 38.500" stroke="#000" stroke-width="3" /><path d="M13.500 20V35M19.500 20V35M24.500 20V35" stroke="#000" stroke-width="2.800" /><path d="M19.500 16V19" stroke="#0d0" stroke-width="3" /><path d="M24.500 16V19" stroke="#00e" stroke-width="3" />
            <path d="M30 35V26Q30 20.500 35 20.500Q40 20.500 40 26V35M40 26Q40 20.500 45 20.500Q50 20.500 50 26V35" fill="none" stroke="#000" stroke-width="2.800" />
            <path d="M54.500 29.500L67 25.500Q65 20.500 60.500 20.500Q54 21 54 27.500Q54.500 34 61 34Q65 34 67 30.500" fill="none" stroke="#000" stroke-width="2.800" />
            <path d="M72 17Q72 10.500 79 10.500Q86 11 86 17Q86 21 72 34.500H87" fill="none" stroke="#000" stroke-width="3.200" />
            <text x="89" y="35.500" textLength="36" lengthAdjust="spacingAndGlyphs" font-family="Noto Sans, sans-serif" font-weight="500" font-size="17">view</text>
          </svg>
        </div>
        <div class="file">File: <b>taxa-bar-plots.qzv</b></div>
        <nav><a class="on">Visualization</a><a>Details</a><a>Provenance</a></nav>
      </div>

      <main class="page">
        <div class="plot">
          <label>Bar Width</label>
          <div class="slider"><i></i><svg width="13" height="17"><path d="M3 .8H10Q12.200.8 12.200 3V9Q12 13 6.500 16Q1 13 .8 9V3Q.8.8 3 .8Z" fill="#f1f1f1" stroke="#999" /></svg></div>
          <p v-fit="743">Tparent | k__Bacteria;p__Bacteroidetes;c__Bacteroidia;o__Bacteroidales;f__Bacteroidaceae;g__Bacteroides | 18.319%</p>
          <div class="bars">
            <div v-for="(bar, i) in bars" :key="i" class="bar">
              <div v-for="(seg, j) in bar" :key="j" class="seg" :style="{ height: seg.height + 'px', background: seg.color }"></div>
            </div>
          </div>
        </div>
        <div class="legend">
          <div class="legend-list">
            <div v-for="row in legend" :key="row.name" class="legend-row"><i :style="{ background: row.color }"></i><span>{{ row.name }}</span></div>
            <div class="legend-row"><i class="last"></i></div>
          </div>
        </div>
        <div class="legend-scroll"></div>
        <div class="page-scroll"></div>
      </main>
    </section>

    <aside class="dock">
      <div v-for="(app, i) in dock" :key="app.icon" class="app" :class="{ first: i === 0 }">
        <div class="marks"><i v-for="d in app.dots" :key="d"></i></div>
        <svg width="48" height="48"><use :href="'#' + app.icon" /></svg>
      </div>
      <div class="grid"><i v-for="n in 9" :key="n"></i></div>
    </aside>

    <header class="panel">
      <div class="panel-left">
        <b v-fit="101">アクティビティ</b>
        <svg width="17" height="17"><use href="#firefox" /></svg>
        <b v-fit="174">Firefox ウェブ・ブラウザ</b>
        <svg class="tri" width="10" height="6"><path d="M0 0H10L5 6Z" /></svg>
      </div>
      <b v-fit="97" class="clock">水曜日 09：00</b>
      <div class="panel-right">
        <b>あ</b>
        <svg class="tri" width="10" height="6"><path d="M0 0H10L5 6Z" /></svg>
        <svg class="net" width="16" height="16"><path d="M5.500 1H10.500V6H5.500ZM0 11H5V16H0ZM11 11H16V16H11Z" fill="#d8d6cf" /><path d="M8 6V8.500M2.500 11V8.500H13.500V11" fill="none" stroke="#d8d6cf" stroke-width="1.400" /></svg>
        <svg class="vol" width="17" height="14"><path d="M0 4.500H3L7 .5V13.500L3 9.500H0Z" fill="#d8d6cf" /><path d="M9 4Q11 7 9 10M11 2.500Q14 7 11 11.500M13 1Q17.500 7 13 13" fill="none" stroke="#d8d6cf" stroke-width="1.500" /></svg>
        <svg class="power" width="15" height="15"><path d="M4 2.800A6 6 0 1 0 11 2.800M7.500 .5V7" fill="none" stroke="#d8d6cf" stroke-width="2" /></svg>
        <svg class="tri" width="10" height="6"><path d="M0 0H10L5 6Z" /></svg>
      </div>
    </header>
  </div>
</template>

<style>
html,
body {
  margin: 0;
  overflow: hidden;
}
</style>

<style scoped>
* {
  box-sizing: border-box;
}
i {
  font-style: normal;
}
svg {
  display: block;
  flex: none;
}
.screen {
  position: relative;
  width: 1920px;
  height: 1080px;
  overflow: hidden;
  font-family: 'Noto Sans', 'Noto Sans CJK JP', sans-serif;
  font-size: 14px;
  background: linear-gradient(45deg, #4a032c 0%, #50042f 4%, #5a0636 10%, #740a47 22%, #7e1041 29%, #911c3b 38%, #9e2230 46%, #aa2828 56%, #b93021 67%, #d04018 78%, #e64c10 92%, #ea4f0d 100%);
}
.defs,
.wallpaper {
  position: absolute;
  left: 0;
  top: 0;
}
[class*='panel'] {
  display: flex;
  align-items: center;
}
.panel {
  position: absolute;
  left: 0;
  top: 0;
  width: 1920px;
  height: 27px;
  justify-content: space-between;
  padding: 0 15px 0 12px;
  background: linear-gradient(#58554d, #403f3a);
  color: #dfdbd2;
  line-height: 28px;
}
.panel b {
  display: inline-block;
  font-weight: 600;
  white-space: nowrap;
}
.panel .clock {
  margin-left: 3px;
}
.panel .tri {
  fill: #d8d6cf;
}
.panel-left {
  width: 850px;
}
.panel-left > svg:nth-child(2) {
  margin: 0 6px 0 20px;
}
.panel-left .tri {
  margin-left: 6px;
}
.panel-right {
  width: 850px;
  justify-content: flex-end;
}
.panel-right > b + .tri {
  margin: 0 32px 0 5px;
}
.vol {
  margin: 0 13px 0 12px;
}
.power {
  margin-right: 11px;
}
.dock {
  position: absolute;
  left: 0;
  top: 27px;
  width: 67px;
  height: 1053px;
  background: linear-gradient(#4e3438, #4a333a 45%, #40363a 70%, #3f3335);
}
.app {
  display: flex;
  align-items: center;
  height: 64px;
}
.app.first {
  position: relative;
}
.app.first::before {
  content: '';
  position: absolute;
  left: 2px;
  top: 1px;
  width: 62px;
  height: 62px;
  border-radius: 4px;
  background: rgba(255, 255, 255, 0.16);
}
.app svg {
  position: relative;
}
.marks {
  display: flex;
  flex-direction: column;
  gap: 2px;
  width: 9px;
  padding-left: 2px;
}
.marks i {
  position: relative;
  width: 6px;
  height: 6px;
  border-radius: 3px;
  background: #e95420;
}
.grid {
  display: grid;
  grid-template-columns: repeat(3, 6px);
  gap: 6px;
  margin: 366px 0 0 18px;
}
.grid i {
  width: 6px;
  height: 6px;
  border-radius: 3px;
  background: #f2f2f0;
}
.item {
  position: absolute;
  width: 150px;
  display: flex;
  flex-direction: column;
  align-items: center;
}
.item-label {
  display: flex;
  flex-direction: column;
  align-items: center;
  color: #fff;
  text-shadow: 1px 1px 1px #000;
  white-space: nowrap;
}
.win {
  position: absolute;
  overflow: hidden;
  border-radius: 7px 7px 0 0;
  box-shadow: 0 3px 16px 3px rgba(0, 0, 0, 0.42);
}
.term-back {
  left: 1378px;
  top: 990px;
  width: 700px;
  height: 120px;
  background: #3e3d38;
  color: #7d7b74;
  padding-left: 461px;
  line-height: 28px;
}
.term {
  left: 587px;
  top: 1013px;
  width: 700px;
  height: 100px;
  background: linear-gradient(#44433d, #3c3b37 30px);
}
.term header {
  height: 32px;
  padding-left: 242px;
  line-height: 30px;
  color: #7d7b74;
}
.term b,
.term i,
.files b,
.files i {
  display: inline-block;
  white-space: nowrap;
}
.term nav {
  display: flex;
  gap: 13px;
  height: 28px;
  padding-left: 6px;
  line-height: 28px;
  color: #b5b2a9;
}
.term-body {
  height: 40px;
  background: #2d0922;
}
.files {
  left: 953px;
  top: 1005px;
  width: 1000px;
  height: 120px;
  background: linear-gradient(#44433e, #3c3b37 45px);
}
.files header {
  display: flex;
  gap: 10px;
  height: 47px;
  padding: 4px 0 0 8px;
}
.group {
  display: flex;
  height: 39px;
  border: 1px solid #33322d;
  border-radius: 4px;
}
.group span {
  display: flex;
  align-items: center;
  justify-content: center;
  border-right: 1px solid #33322d;
}
.group span:last-child {
  border-right: 0;
}
.nav-group span {
  width: 31.5px;
}
.path-group {
  color: #bab7ae;
}
.path-group .arrow-cell {
  width: 21px;
}
.path-group .home-cell {
  width: 87px;
  gap: 5px;
}
.here-cell {
  width: 184px;
  background: #45443e;
  box-shadow: inset 0 1px 2px #2b2a27;
}
.files-body {
  display: flex;
  height: 60px;
}
.rail {
  width: 38px;
  background: #4d4c45;
  padding: 9px 0 0 10px;
}
.place {
  width: 185px;
  padding-left: 14px;
  line-height: 37px;
  color: #eeece6;
}
.column {
  position: relative;
  flex: 1;
  display: flex;
  background: #fbfbfa;
  border-left: 1px solid #ccc;
  padding-left: 7px;
  line-height: 34px;
  color: #777;
}
.column svg {
  margin: 13px 0 0 684px;
}
.firefox-win {
  left: 322px;
  top: 32px;
  width: 1334px;
  height: 780px;
  background: #fff;
}
.tabbar {
  display: flex;
  align-items: flex-end;
  height: 38px;
  padding-left: 39px;
  background: linear-gradient(#5c5950, #42413b);
  border-bottom: 1px solid #2f2e2a;
}
.tab {
  display: flex;
  align-items: center;
  width: 105px;
  height: 33px;
  padding: 1px 0 0 9px;
  gap: 6px;
  border-left: 1px solid #74726a;
  color: #dedbd4;
}
.tab.active {
  height: 34px;
  margin-bottom: -1px;
  padding: 0 0 0 10px;
  background: #f4f3f1;
  border-top: 2px solid #ee7f54;
  border-left: 0;
  color: #3c3c3a;
}
.tab-title {
  width: 62px;
  overflow: hidden;
  white-space: nowrap;
  font-size: 13.6px;
  -webkit-mask-image: linear-gradient(90deg, #000 55%, transparent 100%);
  mask-image: linear-gradient(90deg, #000 55%, transparent 100%);
}
.tab.active .tab-title {
  width: 45px;
}
.tab-close {
  margin-left: 0;
}
.jq {
  width: 16px;
  font: 500 14.5px 'Noto Sans', sans-serif;
  letter-spacing: -0.5px;
  color: #0c0c0c;
}
.tab-end {
  width: 1px;
  height: 33px;
  background: #74726a;
}
.plus {
  margin: 0 0 9px 9px;
}
.controls {
  display: flex;
  gap: 3px;
  margin: 0 0 10px 50px;
}
.toolbar {
  display: flex;
  align-items: center;
  height: 40px;
  padding-left: 3px;
  background: #f4f3f1;
  color: #565654;
}
.back {
  display: flex;
  align-items: center;
  justify-content: center;
  width: 34px;
  height: 34px;
  border: 1px solid #aaa;
  border-radius: 17px;
  background: #fcfcfb;
}
.forward {
  margin-left: 7px;
}
.reload {
  margin-left: 15px;
}
.home {
  margin-left: 15px;
}
.urlbar {
  display: flex;
  align-items: center;
  width: 827px;
  height: 30px;
  margin-left: 108px;
  padding-left: 7px;
  border: 1px solid #bcbab6;
  border-radius: 4px;
  background: #fff;
}
.vr {
  width: 1px;
  height: 22px;
  margin-left: 7px;
  background: #c9c9c7;
}
.lock {
  margin: 0 10px 0 7px;
}
.url {
  display: inline-block;
  white-space: nowrap;
  color: #8b8b89;
}
.url b {
  font-weight: 400;
  color: #1c1c1c;
}
.dots {
  margin-left: 12px;
  fill: #676765;
}
.pocket {
  margin: 0 12px;
}
.tools {
  display: flex;
  align-items: center;
  margin-left: 109px;
}
.tools svg {
  margin-right: 16px;
}
.tools .account {
  margin: -4px -1px 0 0;
}
.tools .tall {
  height: 34px;
  margin: 0 15px 0 7px;
}
.tools svg:last-child {
  margin: 0;
}
.bookmarks {
  display: flex;
  align-items: center;
  gap: 4px;
  height: 30px;
  padding: 0 0 2px 12px;
  background: #f4f3f1;
  border-bottom: 1px solid #bab9b7;
  color: #3c3c3a;
}
.bookmarks span {
  display: inline-block;
  white-space: nowrap;
}
.page-head {
  position: relative;
  display: flex;
  height: 50px;
  background: #f8f8f8;
  box-shadow: 0 1px 4px rgba(0, 0, 0, 0.5);
  font-family: 'Liberation Sans', Arial, sans-serif;
  line-height: 50px;
  color: #777;
}
.logo {
  width: 508px;
  padding: 5px 0 0 97px;
}
.file {
  width: 443px;
  font-size: 16px;
  line-height: 53px;
}
.page-head nav {
  display: flex;
}
.page-head a {
  padding: 0 15px;
  font-size: 14px;
}
.page-head a.on {
  padding: 0 15.5px;
  background: #e7e7e7;
  color: #555;
}
.page {
  display: flex;
  height: 622px;
  padding-left: 15px;
  font-family: 'Liberation Sans', Arial, sans-serif;
  color: #333;
}
.plot {
  width: 753px;
}
.plot label {
  display: block;
  padding-top: 8px;
  height: 40px;
  font-weight: 700;
  line-height: 20px;
}
.slider {
  display: flex;
  align-items: center;
  height: 18px;
}
.slider i {
  width: 190px;
  height: 4px;
  border: 1px solid #b5b5b5;
  border-top-color: #999;
  border-radius: 2px;
  background: #ddd;
}
.slider svg {
  margin: 1px 0 0 -160px;
}
.plot p {
  display: inline-block;
  margin: 24px 0 30px;
  line-height: 20px;
  white-space: nowrap;
}
.bars {
  display: flex;
  gap: 2px;
  width: 721px;
  height: 490px;
}
.bar {
  flex: 1;
}
.bar:first-child {
  flex: 0 0 19px;
}
.seg {
  box-shadow: inset 0 1px rgba(255, 255, 255, 0.28), inset -1px 0 rgba(255, 255, 255, 0.3);
}
.seg:first-child {
  box-shadow: inset -1px 0 rgba(255, 255, 255, 0.3);
}
.legend {
  width: 527px;
  height: 492px;
  margin-top: 130px;
  overflow: hidden;
}
.legend-list {
  margin-top: -13px;
}
.legend-row {
  display: flex;
  align-items: flex-start;
  gap: 6px;
  height: 20px;
  font: 10px/19px 'Noto Sans CJK JP', sans-serif;
  color: #111;
  white-space: nowrap;
}
.legend-row i {
  flex: none;
  width: 18px;
  height: 18px;
  margin-top: 1px;
}
.legend-row i.last {
  background: #beaed4;
}
.legend-scroll {
  width: 5px;
  height: 154px;
  margin: 231px 0 0 7px;
  background: #f4936c;
}
.page-scroll {
  width: 5px;
  height: 404px;
  margin: 54px 0 0 22px;
  background: #f4936c;
}
</style>
